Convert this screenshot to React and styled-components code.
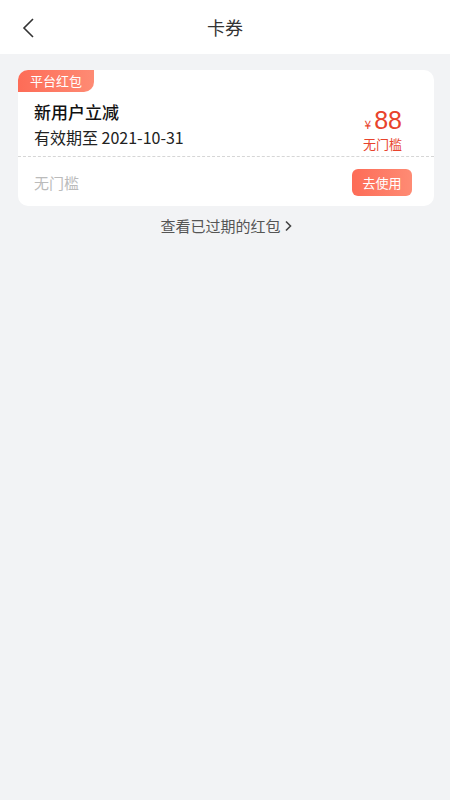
import React from 'react'
import styled, { createGlobalStyle } from 'styled-components'

const Global = createGlobalStyle`
  html, body {
    margin: 0;
    padding: 0;
    background: #f2f3f5;
    font-family: "Noto Sans CJK SC", "Noto Sans", sans-serif;
  }
`

const Page = styled.div`
  min-height: 800px;
  background: #f2f3f5;
`

const Header = styled.header`
  height: 54px;
  background: #fff;
  display: flex;
  align-items: center;
  justify-content: center;
  position: relative;
`

const Back = styled.button`
  position: absolute;
  left: 16px;
  top: 15px;
  width: 26px;
  height: 26px;
  padding: 0;
  border: none;
  background: none;
  display: flex;
  align-items: center;
  justify-content: center;
`

const Title = styled.h1`
  margin: 0;
  font-size: 18px;
  font-weight: 400;
  color: #333;
`

const List = styled.div`
  padding: 16px 16px 0 18px;
`

const Card = styled.div`
  background: #fff;
  border-radius: 10px;
  overflow: hidden;
`

const Tag = styled.div`
  width: fit-content;
  height: 22px;
  line-height: 22px;
  padding: 0 12px;
  font-size: 13px;
  color: #fff;
  background: linear-gradient(90deg, #fd6c57, #fe8b74);
  border-bottom-right-radius: 10px;
`

const Main = styled.div`
  display: flex;
  align-items: flex-start;
  justify-content: space-between;
  padding: 0 32px 4px 16px;
  border-bottom: 1px dashed #d6d6d6;
`

const Info = styled.div`
  display: flex;
  flex-direction: column;
  gap: 1px;
  padding-top: 8px;
`

const Name = styled.div`
  font-size: 17px;
  font-weight: 500;
  color: #111;
  line-height: 24px;
`

const Expire = styled.div`
  font-size: 16px;
  color: #222;
  line-height: 24px;
`

const Price = styled.div`
  display: flex;
  flex-direction: column;
  align-items: flex-end;
  gap: 2px;
  color: #e8432c;
  padding-top: 14px;
`

const Amount = styled.div`
  display: flex;
  align-items: baseline;
  height: 28px;
`

const Yen = styled.span`
  font-size: 12px;
  line-height: 14px;
  margin-right: 3px;
`

const Num = styled.span`
  font-family: "Liberation Sans", Arial, sans-serif;
  font-size: 25px;
  line-height: 28px;
`

const Limit = styled.div`
  font-size: 13px;
  line-height: 16px;
`

const Foot = styled.div`
  display: flex;
  align-items: center;
  justify-content: space-between;
  padding: 12px 22px 10px 16px;
`

const Muted = styled.span`
  font-size: 15px;
  color: #bbb;
`

const UseButton = styled.button`
  width: 60px;
  height: 27px;
  border: none;
  border-radius: 6px;
  background: linear-gradient(90deg, #fd6c57, #fe8b74);
  color: #fff;
  font-family: inherit;
  font-size: 13px;
  padding: 0;
`

const Expired = styled.a`
  display: flex;
  align-items: center;
  justify-content: center;
  gap: 3px;
  margin-top: 9px;
  font-size: 15px;
  color: #555;
  text-decoration: none;
`

export default function App() {
  return (
    <Page>
      <Global />
      <Header>
        <Back aria-label="返回">
          <svg width="14" height="22" viewBox="0 0 14 22">
            <path d="M11 2 L2 11 L11 20" fill="none" stroke="#333" strokeWidth="1.6" />
          </svg>
        </Back>
        <Title>卡券</Title>
      </Header>
      <List>
        <Card>
          <Tag>平台红包</Tag>
          <Main>
            <Info>
              <Name>新用户立减</Name>
              <Expire>有效期至 2021-10-31</Expire>
            </Info>
            <Price>
              <Amount>
                <Yen>¥</Yen>
                <Num>88</Num>
              </Amount>
              <Limit>无门槛</Limit>
            </Price>
          </Main>
          <Foot>
            <Muted>无门槛</Muted>
            <UseButton>去使用</UseButton>
          </Foot>
        </Card>
        <Expired href="#">
          查看已过期的红包
          <svg width="8" height="12" viewBox="0 0 8 12">
            <path d="M2 1.5 L6.5 6 L2 10.5" fill="none" stroke="#444" strokeWidth="1.6" />
          </svg>
        </Expired>
      </List>
    </Page>
  )
}
